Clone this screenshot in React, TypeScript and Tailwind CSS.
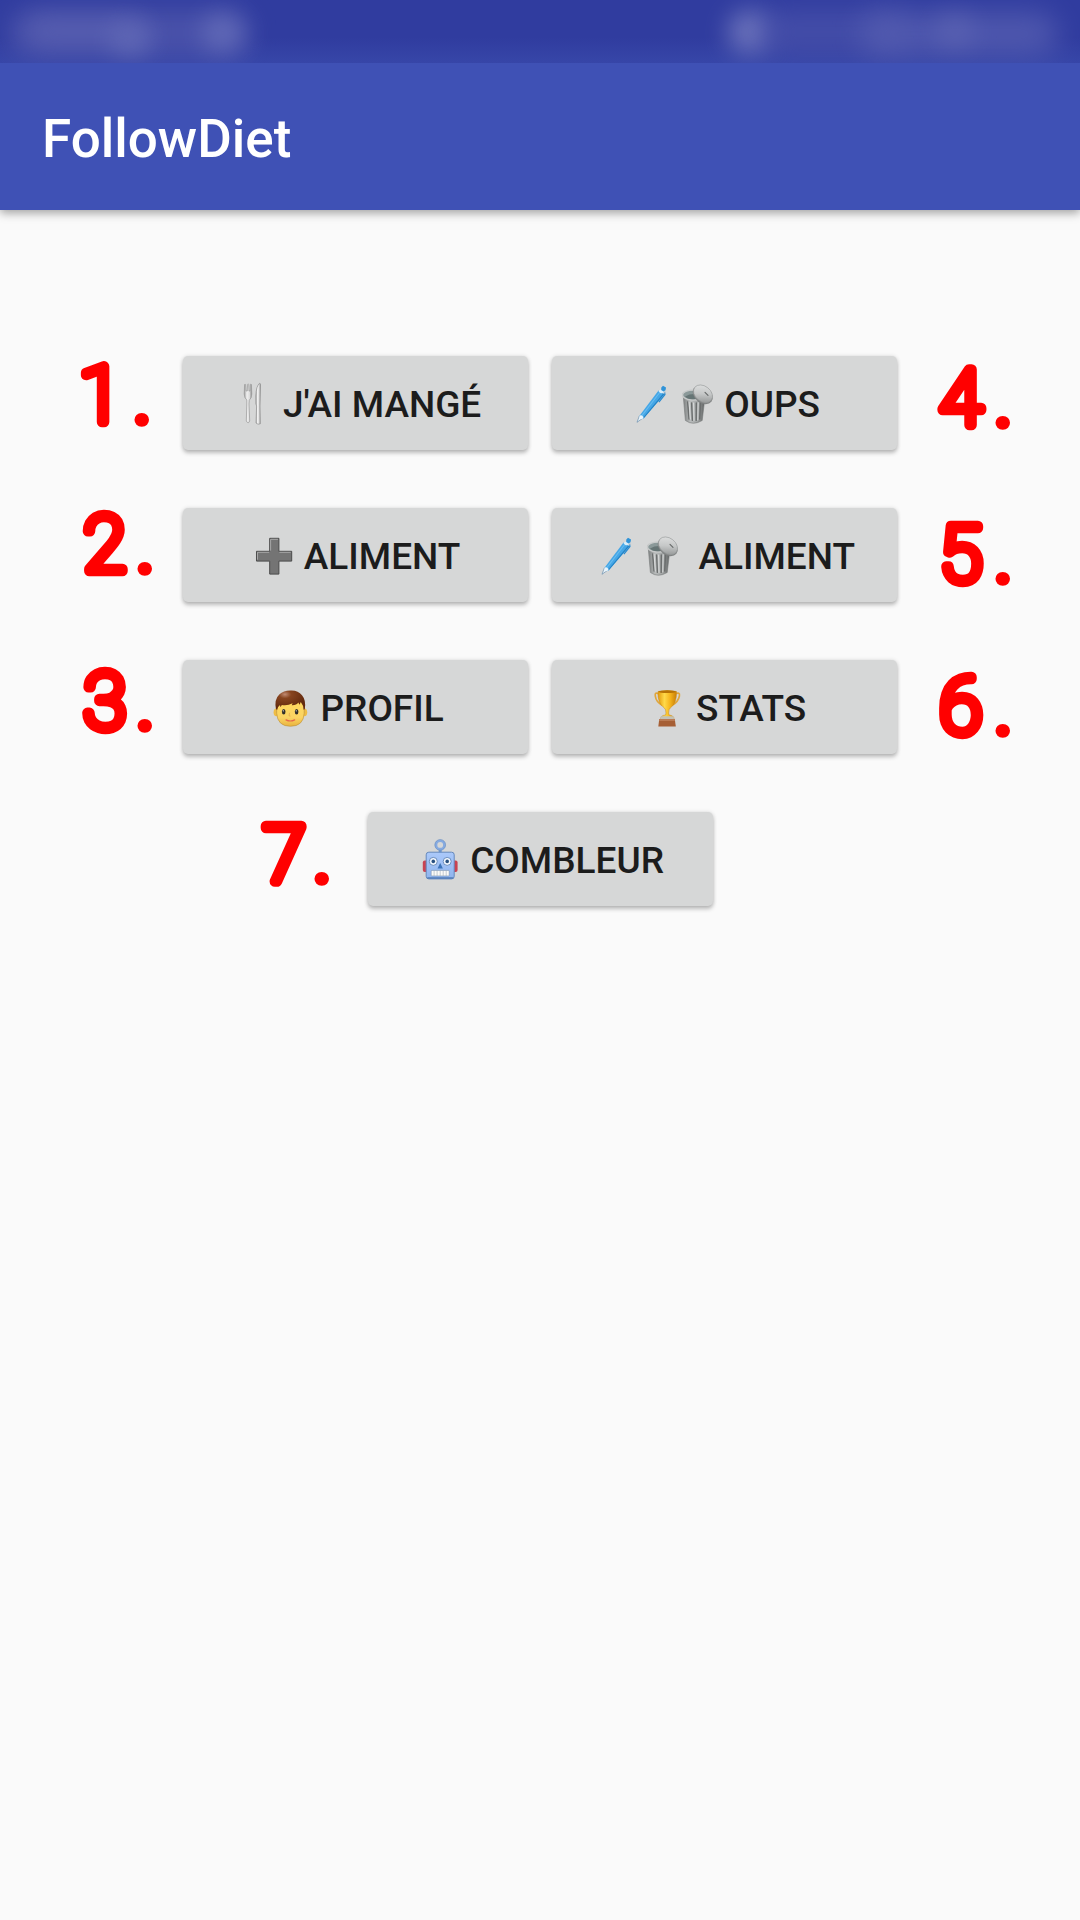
import type { ReactNode } from "react";

function Icon({ children }: { children: ReactNode }) {
  return (
    <svg viewBox="0 0 42 42" className="h-[42px] w-[42px] shrink-0 overflow-visible">
      {children}
    </svg>
  );
}

function Gradients() {
  return (
    <svg className="absolute h-0 w-0">
      <defs>
        <linearGradient id="steel" x1="0" x2="1">
          <stop offset="0" stopColor="#9a9a9a" />
          <stop offset="0.35" stopColor="#f1f1f1" />
          <stop offset="0.7" stopColor="#dcdcdc" />
          <stop offset="1" stopColor="#858585" />
        </linearGradient>
        <linearGradient id="bin" x1="0" x2="1">
          <stop offset="0" stopColor="#7d8080" />
          <stop offset="0.35" stopColor="#b9bcbc" />
          <stop offset="0.65" stopColor="#a2a5a5" />
          <stop offset="1" stopColor="#5c5f5f" />
        </linearGradient>
        <linearGradient id="lid" x1="0" y1="0" x2="1" y2="1">
          <stop offset="0" stopColor="#e4e5e5" />
          <stop offset="0.5" stopColor="#c6c8c8" />
          <stop offset="1" stopColor="#868989" />
        </linearGradient>
        <linearGradient id="gold" x1="0" x2="1">
          <stop offset="0" stopColor="#e39a0c" />
          <stop offset="0.35" stopColor="#ffd94a" />
          <stop offset="0.65" stopColor="#f6b51c" />
          <stop offset="1" stopColor="#c87f08" />
        </linearGradient>
        <linearGradient id="skin" x1="0" y1="0" x2="0" y2="1">
          <stop offset="0" stopColor="#ffd95c" />
          <stop offset="0.7" stopColor="#fbd463" />
          <stop offset="1" stopColor="#e9b33e" />
        </linearGradient>
        <radialGradient id="hair" cx="0.32" cy="0.2" r="0.7">
          <stop offset="0" stopColor="#c08a72" />
          <stop offset="0.3" stopColor="#87441f" />
          <stop offset="1" stopColor="#642a0e" />
        </radialGradient>
        <linearGradient id="robot" x1="0" y1="0" x2="0" y2="1">
          <stop offset="0" stopColor="#abc9fa" />
          <stop offset="1" stopColor="#8fb4ee" />
        </linearGradient>
      </defs>
    </svg>
  );
}

function CutleryIcon() {
  return (
    <Icon>
      <path
        d="M12.6 2.5 Q13 1.6 13.6 2.5 L14.1 9 L15.3 9 L15.6 2.3 Q16.2 1.5 16.7 2.3 L17 9 L18.1 9 L18.3 2.5 Q19 1.6 19.4 2.5 L19.8 12 Q19.8 16 17.3 18.2 L17 22 L17.7 39 Q16.2 42.5 14.3 39 L14.8 22 L14.8 18 Q12.3 16 12.2 12 Z"
        fill="url(#steel)"
        stroke="#999"
        strokeWidth="0.7"
      />
      <path
        d="M27.5 1.3 Q24.2 4 23.8 14 L23.9 22 L24.6 24 L24 41 Q26 43 28.3 41.8 L28 24 L28.5 3 Q28.4 1 27.5 1.3 Z"
        fill="url(#steel)"
        stroke="#909090"
        strokeWidth="0.7"
      />
    </Icon>
  );
}

function PenIcon() {
  return (
    <Icon>
      <path d="M6 40.3 L8.3 34 L11.5 36.3 Z" fill="#e8f3fa" stroke="#6b8fae" strokeWidth="0.7" />
      <path d="M8.3 34 L27.5 8.5 L33.3 12.3 L12.6 36.6 Q9.5 37.3 8.3 34 Z" fill="#45a6e6" />
      <path d="M10.3 33.5 L28.7 9.7 L29.5 10.2 L11.3 34 Z" fill="#68bdf0" />
      <path d="M12.6 36.6 L33.3 12.3 L32.2 11.6 L11.6 36.2 Z" fill="#2383c5" />
      <path d="M8.3 34 Q9.5 32.6 11 33.6 Q12.7 34.6 12.6 36.6 L9.2 37.2 Z" fill="#eaf5fc" />
      <path d="M27.5 9.2 Q29 7 31.2 7.5 Q33 8.600 32.4 10.6 Q31 11.6 29.6 11.2 Z" fill="#d9eefb" />
      <path d="M30.3 5.5 L32 3.7 L35 5.4 L34.5 8.3 L32.5 9.4 L30.2 8 Z" fill="#2f93d8" />
      <path d="M34 9 L34.6 12.8 L28.4 20.6 L27.4 19.7 L33 12.6 Z" fill="#2a8bcf" />
    </Icon>
  );
}

function TrashIcon() {
  return (
    <Icon>
      <path d="M10 11 L12.4 38.5 Q20 44 29.2 38.5 L32 15 Z" fill="url(#bin)" stroke="#777a7a" strokeWidth="0.6" />
      <path
        d="M14.6 20 L16 37 M18.6 21 L19.4 38.4 M23.3 21 L23.2 38.4 M27.6 20 L26.7 37"
        stroke="#6b6e6e"
        strokeWidth="1.4"
        fill="none"
        strokeLinecap="round"
      />
      <path
        d="M16.1 20 L17.3 37 M20.6 21 L21 38.4 M25.2 20.7 L24.8 38"
        stroke="#dadcdc"
        strokeWidth="1"
        fill="none"
        strokeLinecap="round"
      />
      <ellipse cx="20.5" cy="13" rx="11" ry="5" fill="#8b9999" stroke="#c8caca" strokeWidth="1.3" />
      <path d="M12 14.5 Q20 10 31 14 Q26 17.6 19 17.3 Q14 17 12 14.5 Z" fill="#667575" />
      <ellipse cx="29.7" cy="12.9" rx="11" ry="8" transform="rotate(38 29.7 12.9)" fill="#808383" />
      <ellipse cx="30" cy="11.8" rx="10.5" ry="7.7" transform="rotate(38 30 11.8)" fill="url(#lid)" stroke="#979a9a" strokeWidth="0.6" />
      <path d="M32 10.4 L35 13.4" stroke="#636666" strokeWidth="1.1" fill="none" strokeLinecap="round" />
    </Icon>
  );
}

function PlusIcon() {
  return (
    <Icon>
      <g transform="translate(0.2 -0.3)">
        <path
          d="M16.5 4.6 H25.7 V17.6 H38.5 V27.4 H25.7 V40.4 H16.5 V27.4 H3.3 V17.6 H16.5 Z"
          fill="#747474"
          stroke="#4b4b4b"
          strokeWidth="1"
        />
        <path d="M17.4 17 V5.6 H24.8 M4.3 26 V18.6 H16 M26.2 18.6 H37.5" fill="none" stroke="#b5b5b5" strokeWidth="0.8" />
      </g>
    </Icon>
  );
}

function FaceIcon() {
  return (
    <Icon>
      <g transform="translate(0 -0.7)">
        <ellipse cx="7.4" cy="27" rx="2.8" ry="3.9" fill="#efbd45" />
        <ellipse cx="35.4" cy="27" rx="2.8" ry="3.9" fill="#efbd45" />
        <path
          d="M7.6 20 Q8 11 21.4 11 Q35 11 35.3 20 L35.2 28 Q34.5 41 21.4 41 Q8.5 41 7.7 28 Z"
          fill="url(#skin)"
          stroke="#b98d37"
          strokeWidth="0.6"
        />
        <path
          d="M7 24 Q5 14 10.5 9 Q14.5 5 22 5.2 Q29 4.9 33 10 Q37.3 15 35.8 24 L34.6 24.5 Q34.6 20 31.8 16.6 L30.5 19.5 L29.3 17.3 Q27.5 20.2 22.7 20 L23.6 18 Q18 20.8 12.8 19.6 L11.5 22 L11 19.8 Q8.6 21.5 8.2 24.5 Z"
          fill="url(#hair)"
        />
        <ellipse cx="14.7" cy="26.5" rx="1.8" ry="2.8" fill="#33302a" />
        <ellipse cx="27.6" cy="26.5" rx="1.8" ry="2.8" fill="#33302a" />
        <circle cx="14.3" cy="25.5" r="0.6" fill="#fff" />
        <circle cx="27.2" cy="25.5" r="0.6" fill="#fff" />
        <path d="M20.5 27.5 L20 30.5 L21.5 30.8" stroke="#dfa148" strokeWidth="0.7" fill="none" />
        <path d="M17 34.6 Q21.3 36.8 25.7 34.6" stroke="#e5674c" strokeWidth="1.2" fill="none" strokeLinecap="round" />
      </g>
    </Icon>
  );
}

function TrophyIcon() {
  return (
    <Icon>
      <path
        d="M14 8 Q9.5 5.5 10.3 10 Q11 16 17.5 19.5 M30 8 Q35.2 5.5 34.4 10 Q33.3 16 26.8 19.5"
        stroke="#e0a63c"
        strokeWidth="1.7"
        fill="none"
      />
      <path
        d="M13 5.5 Q22 3.7 31.5 5.5 Q31.8 17.5 25.7 21.5 Q23.6 23 23.6 27 L24 29 Q29 29.5 29 33 H15.5 Q15.5 29.5 20.6 29 L21 27 Q21 23 18.9 21.5 Q12.5 17.5 13 5.5 Z"
        fill="url(#gold)"
        stroke="#c98712"
        strokeWidth="0.5"
      />
      <ellipse cx="22.2" cy="5.7" rx="8.8" ry="1.4" fill="#b87305" />
      <rect x="15.3" y="30.3" width="13.6" height="3.4" rx="1.3" fill="#c2c2b8" />
      <path d="M14.3 33 H29.8 L30.8 40.6 H13.3 Z" fill="#a65f35" />
      <path d="M14.3 33 H29.8 L30 35 H14 Z" fill="#ba7b54" />
    </Icon>
  );
}

function RobotIcon() {
  return (
    <Icon>
      <g transform="translate(-0.4 -0.6)">
        <rect x="4.2" y="23" width="7" height="11.5" rx="2" fill="#c94352" />
        <rect x="32" y="23" width="7" height="11.5" rx="2" fill="#c94352" />
        <path d="M21.6 12 V16" stroke="#6f98d1" strokeWidth="3" />
        <circle cx="21.6" cy="7.5" r="4.2" fill="none" stroke="#86aae0" strokeWidth="2.6" />
        <circle cx="21.6" cy="7.5" r="5.4" fill="none" stroke="#6186bb" strokeWidth="0.5" />
        <rect x="7.6" y="14.8" width="28" height="26.7" rx="2.6" fill="url(#robot)" stroke="#6488bd" strokeWidth="1" />
        <path d="M9.3 40.5 H34" stroke="#527cb7" strokeWidth="1.5" strokeLinecap="round" />
        <circle cx="14.7" cy="24" r="4" fill="#f2f7fd" stroke="#6185b5" strokeWidth="0.9" />
        <circle cx="28.6" cy="24" r="4" fill="#f2f7fd" stroke="#6185b5" strokeWidth="0.9" />
        <circle cx="14.7" cy="24" r="1.8" fill="#285080" />
        <circle cx="28.6" cy="24" r="1.8" fill="#285080" />
        <path d="M21.6 25.6 L24.3 31 H18.9 Z" fill="#3c74ba" />
        <rect x="12.6" y="33" width="18" height="5.5" rx="0.6" fill="#fbfbf8" stroke="#6d84a1" strokeWidth="0.5" />
        <path d="M15.5 33 V38.5 M18.5 33 V38.5 M21.6 33 V38.5 M24.6 33 V38.5 M27.6 33 V38.5" stroke="#9caab9" strokeWidth="0.6" />
      </g>
    </Icon>
  );
}

function MenuButton({ icons, label }: { icons: ReactNode; label: string }) {
  return (
    <button className="flex h-[94px] w-[345px] shrink-0 items-center justify-center rounded-[5px] bg-[#d6d7d7] pl-[2px] text-[37px] leading-none font-medium whitespace-pre text-[#1c1c1c] shadow-[0_3px_4px_rgba(0,0,0,0.24),0_0_4px_rgba(0,0,0,0.12)]">
      {icons}
      <span className="pt-[3px]">{label}</span>
    </button>
  );
}

/** Red step number with rounded strokes; x, y and dotX are measured inside the label's own box. */
function StepLabel({ n, x, y, dotX, className }: { n: string; x: number; y: number; dotX: number; className: string }) {
  return (
    <svg
      className={"h-[94px] shrink-0 overflow-visible fill-[#ff0000] stroke-[#ff0000] [stroke-linejoin:round] " + className}
    >
      <text x={x} y={y} className="text-[78px] font-thin [stroke-width:10.5px]">
        {n}
      </text>
      <text x={dotX} y={y + 3} textAnchor="middle" className="text-[80px] font-medium [stroke-width:3.5px]">
        .
      </text>
    </svg>
  );
}

export default function App() {
  return (
    <div className="flex h-[1920px] w-[1080px] flex-col overflow-hidden bg-[#fafafa] font-['Roboto',sans-serif]">
      <Gradients />
      <div className="relative z-10 h-[63px] overflow-hidden bg-linear-to-b from-[#303c9f] from-60% to-[#3746a8]">
        <div className="absolute top-[10px] left-[8px] h-[46px] w-[240px] rounded-full bg-[#5158ad] opacity-80 blur-[14px]" />
        <div className="absolute top-[16px] left-[26px] h-[30px] w-[120px] rounded-full bg-[#6066b4] opacity-60 blur-[13px]" />
        <div className="absolute top-[24px] left-[110px] h-[32px] w-[42px] rounded-full bg-[#6a72bb] opacity-60 blur-[12px]" />
        <div className="absolute top-[14px] left-[202px] h-[38px] w-[42px] rounded-full bg-[#6c74bd] opacity-70 blur-[12px]" />
        <div className="absolute top-[10px] left-[728px] h-[44px] w-[44px] rounded-full bg-[#7279be] opacity-90 blur-[12px]" />
        <div className="absolute top-[10px] left-[760px] h-[44px] w-[150px] rounded-full bg-[#4c54ac] opacity-70 blur-[14px]" />
        <div className="absolute top-[12px] left-[860px] h-[44px] w-[198px] rounded-full bg-[#565eb1] opacity-80 blur-[14px]" />
        <div className="absolute top-[14px] left-[935px] h-[34px] w-[40px] rounded-full bg-[#636ab5] opacity-55 blur-[12px]" />
      </div>
      <header className="flex h-[147px] shrink-0 items-center bg-[#3f51b5] px-[42px] pt-[5px] shadow-[0_3px_9px_rgba(0,0,0,0.36)]">
        <h1 className="text-[53px] leading-none font-medium text-white">FollowDiet</h1>
      </header>
      <main className="flex flex-col gap-[58px] pt-[146px]">
        <div className="flex h-[94px]">
          <StepLabel n="1" x={79} y={65.5} dotX={142} className="w-[183px]" />
          <MenuButton icons={<CutleryIcon />} label=" J'AI MANGÉ" />
          <div className="w-[24px]" />
          <MenuButton icons={<><PenIcon /><TrashIcon /></>} label=" OUPS" />
          <StepLabel n="4" x={42.5} y={68.5} dotX={106} className="w-[183px]" />
        </div>
        <div className="flex h-[94px]">
          <StepLabel n="2" x={83.5} y={63} dotX={145} className="w-[183px]" />
          <MenuButton icons={<PlusIcon />} label=" ALIMENT" />
          <div className="w-[24px]" />
          <MenuButton icons={<><PenIcon /><TrashIcon /></>} label="  ALIMENT" />
          <StepLabel n="5" x={42.5} y={72.5} dotX={106} className="w-[183px]" />
        </div>
        <div className="flex h-[94px]">
          <StepLabel n="3" x={83.5} y={67.5} dotX={145} className="w-[183px]" />
          <MenuButton icons={<FaceIcon />} label=" PROFIL" />
          <div className="w-[24px]" />
          <MenuButton icons={<TrophyIcon />} label=" STATS" />
          <StepLabel n="6" x={42.5} y={73} dotX={106} className="w-[183px]" />
        </div>
        <div className="flex h-[94px]">
          <StepLabel n="7" x={263} y={69} dotX={322} className="w-[368px]" />
          <MenuButton icons={<RobotIcon />} label=" COMBLEUR" />
        </div>
      </main>
    </div>
  );
}
